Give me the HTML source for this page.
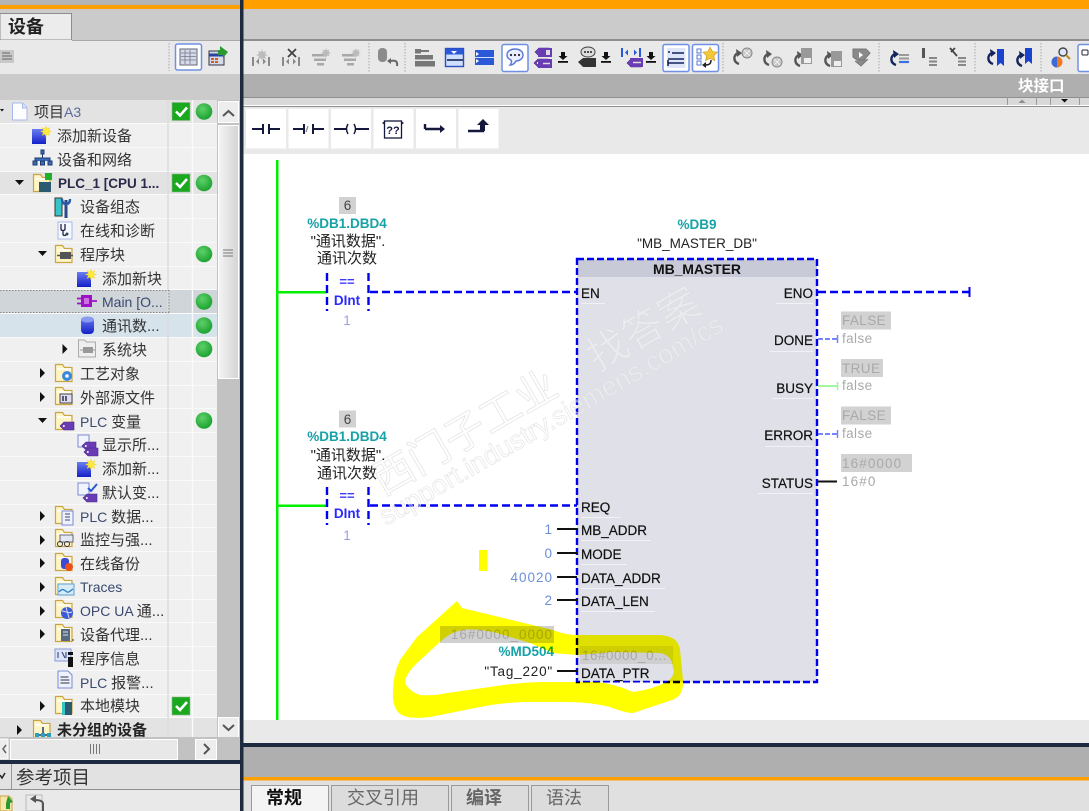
<!DOCTYPE html>
<html lang="zh"><head><meta charset="utf-8"><title>TIA Portal</title>
<style>
html,body{margin:0;padding:0;width:1089px;height:811px;overflow:hidden;background:#fff}
svg{display:block;filter:blur(.35px)}
text{font-family:"Liberation Sans","Noto Sans CJK SC",sans-serif}
.t{font-size:15px;fill:#333}
.l{font-size:13.5px;fill:#111;stroke:#111;stroke-width:.2}
.r{font-size:13.5px;fill:#111;stroke:#111;stroke-width:.2;text-anchor:end}
.teal{font-size:13.5px;fill:#17a2a8;font-weight:bold;text-anchor:middle}
.c{font-size:15px;fill:#222;text-anchor:middle}
.v{font-size:13.5px;fill:#6f8fd8;text-anchor:end;letter-spacing:1px}
.g{font-size:13.5px;fill:#a9a9a9;letter-spacing:.4px}
.tab{font-size:18px;fill:#666;text-anchor:middle}
</style></head><body>
<svg xmlns="http://www.w3.org/2000/svg" width="1089" height="811" viewBox="0 0 1089 811">
<defs>
<radialGradient id="gd" cx=".4" cy=".35" r=".7"><stop offset="0" stop-color="#5fd06a"/><stop offset="1" stop-color="#17a02c"/></radialGradient>
<linearGradient id="sb" x1="0" x2="1" y1="0" y2="0"><stop offset="0" stop-color="#f4f4f4"/><stop offset="1" stop-color="#d4d4d4"/></linearGradient>
<linearGradient id="bt" x1="0" x2="0" y1="0" y2="1"><stop offset="0" stop-color="#6a7df0"/><stop offset="1" stop-color="#1420c8"/></linearGradient>
<g id="dot"><circle r="8.3" fill="url(#gd)"/></g>
<g id="chk"><rect x="-9" y="-9" width="18" height="18" fill="#1aa81e" stroke="#8fb88f" stroke-width=".6"/><path d="M-5 0l4 4 7-8" fill="none" stroke="#fff" stroke-width="2.6"/></g>
<g id="fo"><path d="M.5 3V.5h7l2 3h7.5v14H.5z" fill="#fff4c4" stroke="#c9a544" stroke-width="1.2"/><path d="M2 5h14" stroke="#fff" stroke-width="1.5"/></g>
<g id="add"><rect x="0" y="3" width="14" height="15" fill="url(#bt)"/><path d="M14 0l1 3 3-1.500-1.500 3 3 1-3 1 1.500 3-3-1.500-1 3-1-3-3 1.500 1.500-3-3-1 3-1-1.500-3 3 1.500z" fill="#ffe93a" stroke="#f0d020" stroke-width=".4"/></g>
<path id="ar" d="M0 0l5 5-5 5z" fill="#111"/>
<path id="ad" d="M0 0h9l-4.500 5z" fill="#111"/>
<g id="tg"><path d="M0 5l4-4h10v8H4z" fill="#6a3cb4" stroke="#472a86" stroke-width=".6"/><circle cx="3.800" cy="5" r="1" fill="#fff"/></g>
<g id="dl"><path d="M2 0h4v4h2.500L4 8-.5 4H2z" fill="#111"/><rect x="-1" y="9" width="10" height="1.800" fill="#111"/></g>
<g id="sq"><rect x="0" y="0" width="26" height="27" rx="2" fill="#fff" stroke="#6f90e6" stroke-width="1.500"/></g>
<g id="sep"><path d="M0 0v29" stroke="#a8a8a8" stroke-dasharray="1.500 1.500"/></g>
<g id="bk"><path d="M7 15C1 13 1 6 6 4" fill="none" stroke="#555" stroke-width="2.400"/><path d="M4 0l6 4-5 4z" fill="#555"/></g>
<g id="bkb"><path d="M7 15C1 13 1 6 6 4" fill="none" stroke="#14245c" stroke-width="2.400"/><path d="M4 0l6 4-5 4z" fill="#14245c"/></g>
</defs>

<!-- base -->
<rect width="1089" height="811" fill="#fff"/>
<!-- right top -->
<rect x="243" y="0" width="846" height="9" fill="#ff9f00"/>
<rect x="243" y="9" width="846" height="31" fill="#cbcbcb"/>
<rect x="243" y="39" width="846" height="2" fill="#8e8e8e"/>
<rect x="243" y="41" width="846" height="33" fill="#e9e9e9"/>
<rect x="243" y="74" width="846" height="23" fill="#afafaf"/>
<rect x="243" y="97" width="846" height="8" fill="#d9d9d9"/>
<path d="M243 97.500H1089" stroke="#8e8e8e"/>
<rect x="243" y="105" width="846" height="1.500" fill="#fff"/>
<rect x="243" y="106.500" width="846" height="47.500" fill="#e9e9e9"/>
<path d="M243 106.500H1089" stroke="#8e8e8e"/>
<rect x="243" y="720" width="846" height="23" fill="#e9e9e9"/>
<rect x="243" y="743" width="846" height="4" fill="#1e2a40"/>
<rect x="243" y="747" width="846" height="30" fill="#afafaf"/>
<rect x="243" y="777" width="846" height="3.500" fill="#ff9f00"/>
<rect x="243" y="780.500" width="846" height="31" fill="#e0e0e0"/>

<!-- toolbar icons greyed -->
<g fill="#8a8a8a">
<path d="M252 57h2v9h-2zM256 61.500l3-3v6zM266 61.500l-3-3v6zM268 57h2v9h-2z"/>
<path d="M262 49l1 3 3-1-1 3 3 1-3 1 1 3-3-1-1 3-1-3-3 1 1-3-3-1 3-1-1-3 3 1z" fill="#bbb"/>
<path d="M282 57h2v9h-2zM286 61.500l3-3v6zM296 61.500l-3-3v6zM298 57h2v9h-2z"/>
<path d="M288 49l8 8M296 49l-8 8" stroke="#444" stroke-width="1.800"/>
<path d="M312 54h14v2.500h-14zM314 58.500h12v2.500h-12zM317 63h7v2.500h-7z" fill="#a8a8a8"/>
<path d="M326 48l1 2.500 2.500-1-1 2.500 2.500 1-2.500 1 1 2.500-2.500-1-1 2.500-1-2.500-2.500 1 1-2.500-2.500-1 2.500-1-1-2.500 2.500 1z" fill="#bbb"/>
<path d="M342 54h14v2.500h-14zM344 58.500h12v2.500h-12zM347 63h7v2.500h-7z" fill="#a8a8a8"/>
<path d="M356 48l1 2.500 2.500-1-1 2.500 2.500 1-2.500 1 1 2.500-2.500-1-1 2.500-1-2.500-2.500 1 1-2.500-2.500-1 2.500-1-1-2.500 2.500 1z" fill="#bbb"/>
<rect x="378" y="48" width="9" height="14" rx="4" fill="#8c8c8c"/>
<path d="M397 66c1-5-2-6-6-5" fill="none" stroke="#666" stroke-width="2"/><path d="M387 61l4-3v6z" fill="#666"/>
<path d="M415 49h6v4.500h-6zM415 55h18v4.500h-18zM415 61h20v5.500h-20zM421 50h8v2h-8z" fill="#777"/>
</g>
<use href="#sep" x="369" y="43"/><use href="#sep" x="405" y="43"/>
<rect x="445.500" y="48.500" width="18" height="18" fill="#cfe0ff" stroke="#2a4fc0" stroke-width="1.400"/>
<rect x="446" y="49" width="17" height="5.500" fill="#2a58d8"/><path d="M447 60h16" stroke="#14245c" stroke-width="1.600"/><path d="M451 51h6l-3 3z" fill="#fff"/>
<rect x="475" y="50" width="19" height="15" fill="#2a58d8"/><path d="M475 57.500h19" stroke="#cfe0ff"/><path d="M476 52l3 2-3 2zM476 59l3 2-3 2z" fill="#fff"/>
<use href="#sq" x="502" y="44.500"/>
<path d="M507 55c0-4 4-6 8-6s8 2 8 6-4 6-7 6c-1 2-3 4-6 4 1-1 2-3 1-5-2-1-4-2-4-5z" fill="#eaf0ff" stroke="#5a78d8" stroke-width="1.400"/>
<circle cx="511" cy="55" r="1.100" fill="#223"/><circle cx="515" cy="55" r="1.100" fill="#223"/><circle cx="519" cy="55" r="1.100" fill="#223"/>
<use href="#tg" x="535" y="47"/><rect x="538" y="48" width="14" height="9" fill="#6a3cb4"/><rect x="546" y="50" width="4" height="5" fill="#ddd"/>
<use href="#tg" x="534" y="58"/><rect x="538" y="59" width="14" height="9" fill="#6a3cb4"/><path d="M543 63.500h7" stroke="#ddd" stroke-width="1.500"/>
<use href="#dl" x="559" y="52"/>
<path d="M581 52c0-3 3-5 7-5s7 2 7 5-3 5-7 5-7-2-7-5z" fill="#ddd" stroke="#444"/><circle cx="585" cy="52" r="1" fill="#222"/><circle cx="588" cy="52" r="1" fill="#222"/><circle cx="591" cy="52" r="1" fill="#222"/>
<path d="M578 62l5-4h13v9h-13z" fill="#333"/>
<use href="#dl" x="602" y="52"/>
<path d="M621 48h2v9h-2zM625 52.500l3-3v6zM637 52.500l-3-3v6zM639 48h2v9h-2z" fill="#2a58d8"/>
<use href="#tg" x="627" y="58"/><rect x="630" y="58" width="13" height="9" fill="#6a3cb4"/><path d="M633 62.500h8" stroke="#ddd" stroke-width="1.500"/>
<use href="#dl" x="647" y="52"/>
<use href="#sq" x="663" y="44.500"/><rect x="667" y="48" width="18.500" height="20" fill="#dfe6fa"/>
<path d="M668 52h2M672 53h12M668 60v6M668 63h16M668 59h16" stroke="#14245c" stroke-width="1.600"/>
<use href="#sq" x="692.500" y="44.500"/>
<path d="M697 49h4v4h-4zM697 55h4v4h-4zM697 61h4v4h-4z" fill="none" stroke="#5a78d8"/>
<path d="M710 47l2.500 4.500 5 .7-3.600 3.500.9 5-4.800-2.400-4.400 2.400.9-5-3.600-3.500 5-.7z" fill="#f4c63a" stroke="#c89a1a" stroke-width=".6"/>
<path d="M711 60c0 4-2 5-6 5" fill="none" stroke="#222" stroke-width="1.500"/><path d="M702 65l4-3v6z" fill="#222"/>
<use href="#sep" x="723" y="43"/>
<use href="#bk" x="732" y="49"/><circle cx="747" cy="53" r="5" fill="#c8c8c8" stroke="#888"/><path d="M744 50l6 6M750 50l-6 6" stroke="#eee"/>
<use href="#bk" x="762" y="50"/><circle cx="777" cy="62" r="5" fill="#c8c8c8" stroke="#888"/><path d="M774 59l6 6M780 59l-6 6" stroke="#eee"/>
<use href="#bk" x="793" y="51"/><rect x="801" y="48" width="11" height="16" fill="#999"/><rect x="804" y="58" width="7" height="5" fill="#eee"/>
<use href="#bk" x="823" y="51"/><rect x="831" y="51" width="11" height="16" fill="#999"/><rect x="834" y="61" width="7" height="5" fill="#eee"/>
<path d="M853 49h13l4 4-6 7h-7l-4-3zM855 61l6 5 7-7" fill="#8a8a8a" stroke="#777"/><path d="M859 52l4 3-4 3z" fill="#fff"/>
<use href="#sep" x="879" y="43"/>
<use href="#bkb" x="889" y="50"/><path d="M899 55h10M899 58.500h10" stroke="#999" stroke-width="2"/><path d="M899 62h10" stroke="#3a70e0" stroke-width="2.200"/>
<rect x="922" y="48" width="3" height="10" fill="#555"/><path d="M929 58h8M929 61.500h8M929 65h8" stroke="#888" stroke-width="2"/>
<path d="M950 48l7 8M955 48l-4 4" stroke="#444" stroke-width="1.800"/><path d="M958 58h8M958 61.500h8M958 65h8" stroke="#888" stroke-width="2"/>
<use href="#sep" x="975" y="43"/>
<use href="#bkb" x="986" y="49"/><path d="M997 49h7v17l-3.500-3-3.500 3z" fill="#1a44d0"/>
<use href="#bkb" x="1015" y="51"/><path d="M1025 48h7v16l-3.500-3-3.500 3z" fill="#1a44d0"/>
<use href="#sep" x="1041" y="43"/>
<circle cx="1057" cy="62" r="5.500" fill="#f07820"/><path d="M1057 56.500a5.500 5.500 0 0 0 0 11z" fill="#3a6cd8"/>
<circle cx="1063" cy="52" r="4" fill="#dde8ff" stroke="#444" stroke-width="1.400"/><path d="M1066 55l4 4" stroke="#b89020" stroke-width="2"/>
<rect x="1078" y="44.500" width="13" height="27" rx="2" fill="#fff" stroke="#6f90e6" stroke-width="1.500"/><rect x="1082" y="50" width="6" height="5" rx="1" fill="none" stroke="#223"/>

<text x="1018" y="91" style="font-size:15.500px;font-weight:bold;fill:#fff">块接口</text>
<path d="M1007.500 97v8M1036.500 97v8M1050.500 97v8M1079.500 97v8" stroke="#999"/>
<path d="M1022 99.500l3.500 3.500h-7z" fill="#8e8e8e"/><path d="M1061 99h7l-3.500 3.500z" fill="#111"/>

<!-- ladder buttons -->
<g fill="#fff"><rect x="246" y="109" width="40" height="39.500"/><rect x="288.500" y="109" width="40" height="39.500"/><rect x="331" y="109" width="40" height="39.500"/><rect x="373.500" y="109" width="40" height="39.500"/><rect x="416" y="109" width="40" height="39.500"/><rect x="458.500" y="109" width="40" height="39.500"/></g>
<g fill="none" stroke="#14183c" stroke-width="2">
<path d="M252 129h11M263 124v10M269 124v10M269 129h11"/>
<path d="M293 129h11M304 124v10M313 124v10M313 129h11"/>
<path d="M334 129h12M356 129h13"/><path d="M348 124q-3 5 0 10M354 124q3 5 0 10" stroke-width="1.500"/>
<path d="M425 129h17" stroke-width="2.400"/>
<path d="M425 124v5" stroke-width="2.400"/>
<path d="M468 131h15v-7" stroke-width="2.400"/>
<rect x="384.500" y="121" width="17" height="17" stroke-width="1.300"/>
</g>
<path d="M308 126l-2 6" stroke="#888" stroke-width="1.200"/>
<text x="393" y="134" style="font-size:11px;font-weight:bold;fill:#14183c;text-anchor:middle">??</text>
<path d="M382 123l3 2v-4zM404 123l-3 2v-4z" fill="#14183c"/>
<path d="M440 125l5 4-5 4z" fill="#14183c"/>
<path d="M477 125h12l-6-6z" fill="#14183c"/><rect x="480" y="124" width="5" height="7" fill="#14183c"/>

<!-- LAD: rail -->
<rect x="276" y="160" width="2.500" height="560" fill="#00f000"/>
<rect x="277" y="291" width="50" height="2.500" fill="#00f000"/>
<rect x="277" y="504.500" width="50" height="2.500" fill="#00f000"/>

<!-- FBD block -->
<rect x="577" y="259" width="240" height="423" fill="#dfe0e8"/>
<rect x="578" y="260" width="239" height="17" fill="#c9cad7"/>
<rect x="577" y="259" width="240" height="423" fill="none" stroke="#0000f0" stroke-width="2.400" stroke-dasharray="7 3"/>

<g fill="none" stroke="#0000f0" stroke-width="2.400" stroke-dasharray="8 4">
<path d="M327 273v38M368.500 273v38M370 292H577"/>
<path d="M327 487v38M368.500 487v38M370 505.500H577"/>
<path d="M818 292H969"/>
</g>
<path d="M969.500 287v10" stroke="#0000f0" stroke-width="2"/>

<!-- Watermark -->
<g transform="translate(393 473) rotate(-30)" style="fill:#fff;fill-opacity:.35;stroke:#dcdcdc;stroke-opacity:.75;stroke-width:.8">
<text x="-20" y="15" style="font-size:41px;font-family:'Noto Sans CJK SC',sans-serif" textLength="205">西门子工业</text>
<text x="227" y="15" style="font-size:41px;font-family:'Noto Sans CJK SC',sans-serif" textLength="123">找答案</text>
</g>
<g transform="translate(386 526) rotate(-30)" style="fill:#fff;fill-opacity:.35;stroke:#dcdcdc;stroke-opacity:.75;stroke-width:.7">
<text x="0" y="0" style="font-size:27px" textLength="392">support.industry.siemens.com/cs</text>
</g>

<!-- comparator 1 -->
<rect x="339" y="197" width="17" height="17" fill="#d2d2d2"/>
<text x="347.500" y="210" style="font-size:13.500px;fill:#444;text-anchor:middle">6</text>
<text class="teal" x="347" y="228">%DB1.DBD4</text>
<text class="c" x="348" y="246">"通讯数据".</text>
<text class="c" x="347" y="263">通讯次数</text>
<text x="347" y="286" style="font-size:13px;font-weight:bold;fill:#3a3aff;text-anchor:middle">==</text>
<text x="347" y="305" style="font-size:13.500px;font-weight:bold;fill:#2a2aff;text-anchor:middle">DInt</text>
<text x="347" y="325" style="font-size:13.500px;fill:#9aa0e0;text-anchor:middle">1</text>
<!-- comparator 2 -->
<rect x="339" y="410.500" width="17" height="17" fill="#d2d2d2"/>
<text x="347.500" y="424" style="font-size:13.500px;fill:#444;text-anchor:middle">6</text>
<text class="teal" x="347" y="441">%DB1.DBD4</text>
<text class="c" x="348" y="460">"通讯数据".</text>
<text class="c" x="347" y="478">通讯次数</text>
<text x="347" y="500" style="font-size:13px;font-weight:bold;fill:#3a3aff;text-anchor:middle">==</text>
<text x="347" y="518" style="font-size:13.500px;font-weight:bold;fill:#2a2aff;text-anchor:middle">DInt</text>
<text x="347" y="540" style="font-size:13.500px;fill:#9aa0e0;text-anchor:middle">1</text>

<!-- block header -->
<text x="697" y="229" style="font-size:13.500px;font-weight:bold;fill:#17a2a8;text-anchor:middle">%DB9</text>
<text x="697" y="248" style="font-size:13.500px;fill:#222;text-anchor:middle">"MB_MASTER_DB"</text>
<text x="697" y="274" style="font-size:14px;fill:#111;text-anchor:middle;font-weight:bold" textLength="88">MB_MASTER</text>

<!-- pins labels -->
<text class="l" x="581" y="298">EN</text>
<text class="l" x="581" y="512">REQ</text>
<text class="l" x="581" y="535">MB_ADDR</text>
<text class="l" x="581" y="559">MODE</text>
<text class="l" x="581" y="583">DATA_ADDR</text>
<text class="l" x="581" y="606">DATA_LEN</text>
<text class="l" x="581" y="678">DATA_PTR</text>
<text class="r" x="813" y="298">ENO</text>
<text class="r" x="813" y="345">DONE</text>
<text class="r" x="813" y="393">BUSY</text>
<text class="r" x="813" y="440">ERROR</text>
<text class="r" x="813" y="488">STATUS</text>
<g stroke="#f2f2f6"><path d="M581 303.500h24M581 517.500h40M581 540.500h70M581 564.500h46M581 588.500h84M581 611.500h74M581 683h70M776 303.500h37M770 351.500h43M772 398.500h41M765 446.500h48M758 493.500h55"/></g>

<!-- right outputs -->
<path d="M818 339h20" stroke="#7485ff" stroke-width="2" stroke-dasharray="5 2"/><path d="M837.500 335v8" stroke="#7485ff" stroke-width="1.500"/>
<path d="M818 386h20" stroke="#a2f5a2" stroke-width="2"/><path d="M837.500 382v8" stroke="#a2f5a2" stroke-width="1.500"/>
<path d="M818 434h20" stroke="#7485ff" stroke-width="2" stroke-dasharray="5 2"/><path d="M837.500 430v8" stroke="#7485ff" stroke-width="1.500"/>
<path d="M818 481.500h19" stroke="#111" stroke-width="2"/>
<g fill="#d2d2d2"><rect x="841" y="311.500" width="50" height="18"/><rect x="841" y="359" width="42" height="18"/><rect x="841" y="406.500" width="50" height="18"/><rect x="841" y="454" width="71" height="18"/></g>
<text class="g" x="842" y="325">FALSE</text><text class="g" x="842" y="343">false</text>
<text class="g" x="842" y="373">TRUE</text><text class="g" x="842" y="390">false</text>
<text class="g" x="842" y="420">FALSE</text><text class="g" x="842" y="438">false</text>
<text class="g" x="842" y="468" style="letter-spacing:1.100px">16#0000</text><text class="g" x="842" y="486" style="letter-spacing:1.100px">16#0</text>

<!-- left inputs -->
<g stroke="#111" stroke-width="2"><path d="M557 529h20M557 553h20M557 577h20M557 600h20M557 671h20"/></g>
<text class="v" x="553" y="534">1</text>
<text class="v" x="553" y="558">0</text>
<text class="v" x="553" y="582">40020</text>
<text class="v" x="553" y="605">2</text>
<rect x="440" y="626" width="114" height="17" fill="#d0d0d0"/>
<text x="553" y="639" style="font-size:13.500px;fill:#a8a8a8;text-anchor:end;letter-spacing:1px">16#0000_0000</text>
<text x="554" y="656" style="font-size:13.500px;font-weight:bold;fill:#17a2a8;text-anchor:end">%MD504</text>
<text x="553" y="676" style="font-size:13.500px;fill:#222;text-anchor:end;letter-spacing:.8px">"Tag_220"</text>
<rect x="580" y="646" width="93" height="18" fill="#cfcfd2"/>
<text x="582" y="660" style="font-size:13.500px;fill:#a8a8a8;letter-spacing:.5px">16#0000_0...</text>

<!-- yellow highlight -->
<path style="mix-blend-mode:multiply" fill="#ffff00" fill-rule="evenodd" d="M457 601L462 608L553 630Q565 635 577 635L655 635Q678 634 680 650L683 680Q684 696 672 700L633 713Q625 713 610 707Q590 702 567 702L523 702Q500 703 480 707L430 717Q405 720 398 712Q392 705 393 690Q393 675 400 660L417 637ZM405 683Q410 692 420 695Q435 696 447 693L490 687Q520 682 547 682L597 682Q615 684 633 692Q650 690 667 682Q676 675 673 668Q672 655 660 653L613 652L577 655L553 653L530 643L497 633Q475 628 463 630Q450 632 440 642L417 663Q405 675 405 683Z"/>
<rect x="479" y="550" width="8.500" height="21" fill="#ffff00"/>

<!-- LEFT PANEL -->
<rect x="0" y="0" width="240" height="100" fill="#cbcbcb"/>
<rect x="0" y="0" width="240" height="5" fill="#b4b4b4"/>
<rect x="0" y="5" width="240" height="4" fill="#ff9f00"/>
<path d="M0 13.500H71.500V40H0z" fill="#ececec" stroke="#8e8e8e"/>
<text x="8" y="33" style="font-size:18px;font-weight:bold;fill:#222">设备</text>
<rect x="0" y="40" width="240" height="34" fill="#e9e9e9"/>
<path d="M72 40.500H240" stroke="#a8a8a8"/>
<rect x="0" y="74" width="240" height="26" fill="#cbcbcb"/>
<path d="M0 50h14v13H0z" fill="#c8c8c8"/><path d="M2 53h8M2 56h10M2 59h10" stroke="#777" stroke-width="1.200"/>
<path d="M169 43v28" stroke="#aaa" stroke-dasharray="1.500 1.500"/>
<rect x="175.500" y="44" width="26" height="26" rx="2" fill="#fff" stroke="#6f90e6" stroke-width="1.500"/>
<rect x="180" y="49" width="17" height="16" fill="#d4daea" stroke="#667"/><path d="M181 53h15M181 56.500h15M181 60h15M185 50v14M190 50v14" stroke="#778" stroke-width=".8"/>
<rect x="209" y="51" width="15" height="14" fill="#d4daea" stroke="#334"/><path d="M209 55h15" stroke="#2a44a0" stroke-width="3"/><path d="M211 58h3v2h-3zM215 58h3v2h-3zM211 61h3v2h-3zM215 61h3v2h-3z" fill="#d06020"/>
<path d="M220 46l8 6-5 6v-3h-5v-5h2z" fill="#2a9a30"/>

<!-- tree -->
<rect x="0" y="100" width="217" height="637" fill="#f0f0f0"/>
<rect x="0" y="100" width="217" height="23" fill="#e3e3e3"/>
<rect x="0" y="172" width="217" height="22" fill="#e3e3e3"/>
<rect x="0" y="290" width="192" height="23" fill="#cfd5d9"/>
<rect x="193" y="290" width="24" height="23" fill="#cfd5d9"/>
<rect x="0" y="314" width="217" height="23" fill="#d6e3ea"/>
<rect x="0" y="718" width="217" height="19" fill="#e3e3e3"/>
<g stroke="#fafafa"><path d="M0 123.500H217M0 147.500H217M0 171.500H217M0 194.500H217M0 218.500H217M0 242.500H217M0 266.500H217M0 289.500H217M0 313.500H217M0 337.500H217M0 361.500H217M0 385.500H217M0 408.500H217M0 432.500H217M0 456.500H217M0 480.500H217M0 504.500H217M0 527.500H217M0 551.500H217M0 575.500H217M0 599.500H217M0 622.500H217M0 646.500H217M0 670.500H217M0 694.500H217M0 717.500H217"/></g>
<path d="M168 100V737" stroke="#dcdcdc" stroke-width="1.500"/><path d="M192.500 100V737" stroke="#fafafa" stroke-width="1.500"/>
<path d="M0 290.500H169M0 312.500H169M169 290V313" fill="none" stroke="#8a8a8a" stroke-dasharray="1.500 1.500"/>

<!-- row contents -->
<path d="M0 109h4l-2 2.500z" fill="#111"/>
<path d="M12.500 103h10l4.500 4.500V120h-14.500z" fill="#fdfdff" stroke="#a8b8e8"/><path d="M22.500 103v5h4.500" fill="#dde4f8" stroke="#a8b8e8"/>
<text class="t" x="34" y="117">项目<tspan fill="#5a6a9a" style="font-size:14px">A3</tspan></text>
<use href="#chk" x="181" y="111.500"/><use href="#dot" x="204" y="111.500"/>

<use href="#add" x="32" y="126"/><text class="t" x="57" y="141">添加新设备</text>
<path d="M41 150h3v4h-3zM33 161h4v4h-4zM40.500 161h4v4h-4zM48 161h4v4h-4zM35 161v-3h15v3M42.500 154v4" fill="#3a6cb8" stroke="#223a70"/>
<text class="t" x="57" y="165">设备和网络</text>

<use href="#ad" x="15" y="180"/>
<use href="#fo" x="33" y="174"/><rect x="39" y="182" width="12" height="10" fill="#2c5a70"/><rect x="45" y="173" width="7" height="7" fill="#1fb02a"/>
<text x="58" y="188" style="font-size:13.500px;fill:#2a2a4a;font-weight:bold">PLC_1 [CPU 1...</text>
<use href="#chk" x="181" y="183"/><use href="#dot" x="204" y="183"/>

<rect x="55" y="198" width="7" height="18" fill="#35c4c8" stroke="#333"/><path d="M66 200v18" stroke="#2a4a8a" stroke-width="3"/><path d="M62 199c0 4 2 5 4 5s4-1 4-5" fill="none" stroke="#2a5aa8" stroke-width="2.400"/>
<text class="t" x="80" y="212">设备组态</text>

<rect x="58" y="222" width="14" height="17" fill="#f6f8ff" stroke="#a8b8e8"/><path d="M61 224v5c0 2 4 2 4 0v-5M63 231v3c0 2 3 2 3 0" fill="none" stroke="#224" stroke-width="1.300"/><circle cx="67" cy="234" r="1.500" fill="#345"/>
<text class="t" x="80" y="236">在线和诊断</text>

<use href="#ad" x="38" y="251"/><use href="#fo" x="55" y="245"/><rect x="60" y="252" width="11" height="7" fill="#555"/><path d="M57 255.500h16" stroke="#555" stroke-width="1.500"/>
<text class="t" x="80" y="260">程序块</text><use href="#dot" x="204" y="254"/>

<use href="#add" x="77" y="269"/><text class="t" x="102" y="284">添加新块</text>

<rect x="81" y="295" width="11" height="12" fill="#9c14c8"/><path d="M77 298.500h4M77 303.500h4M92 301h5" stroke="#9c14c8" stroke-width="1.800"/><rect x="84" y="298" width="5" height="6" fill="#d070e0"/>
<text x="102" y="307" style="font-size:14px;fill:#3a4a70">Main [O...</text><use href="#dot" x="204" y="301.500"/>

<rect x="81" y="317" width="13" height="17" rx="4" fill="url(#bt)"/><ellipse cx="87.500" cy="319.500" rx="6.500" ry="3" fill="#8a9af0"/>
<text class="t" x="102" y="331">通讯数...</text><use href="#dot" x="204" y="325.500"/>

<use href="#ar" x="62.500" y="344"/>
<path d="M78.500 341v-1h6l2 2h9v15h-17z" fill="#eee" stroke="#aaa"/><rect x="83" y="347" width="10" height="6" fill="#999"/><path d="M80 350h15" stroke="#999"/>
<text class="t" x="102" y="355">系统块</text><use href="#dot" x="204" y="349"/>

<use href="#ar" x="40" y="368"/><use href="#fo" x="55" y="364"/><circle cx="67" cy="376" r="5" fill="#3a88e0"/><circle cx="67" cy="376" r="1.800" fill="#fff"/>
<text class="t" x="80" y="379">工艺对象</text>
<use href="#ar" x="40" y="392"/><use href="#fo" x="55" y="387"/><rect x="60" y="394" width="12" height="9" fill="#dde" stroke="#445"/><path d="M63 396v5M66 396v5" stroke="#224" stroke-width="1.400"/>
<text class="t" x="80" y="403">外部源文件</text>

<use href="#ad" x="38" y="418"/><use href="#fo" x="55" y="412"/><use href="#tg" x="60" y="421"/>
<text class="t" x="80" y="427"><tspan fill="#3a4a70" style="font-size:14px">PLC </tspan>变量</text><use href="#dot" x="204" y="420.500"/>

<rect x="78" y="435" width="11" height="12" fill="#f0f4ff" stroke="#7a8ad0"/><use href="#tg" x="82" y="441"/><use href="#tg" x="84" y="447"/>
<text class="t" x="102" y="450">显示所...</text>
<use href="#add" x="77" y="459"/><text class="t" x="102" y="474">添加新...</text>
<rect x="78" y="483" width="11" height="12" fill="#f0f4ff" stroke="#7a8ad0"/><path d="M88 488l3 3 6-7" fill="none" stroke="#2a58d8" stroke-width="2"/><use href="#tg" x="83" y="493"/>
<text class="t" x="102" y="498">默认变...</text>

<use href="#ar" x="40" y="511"/><use href="#fo" x="55" y="506"/><rect x="62" y="511" width="11" height="14" fill="#eef2ff" stroke="#7a8ad0"/><path d="M65 514h5M65 517h5M65 520h5" stroke="#446"/>
<text class="t" x="80" y="522"><tspan fill="#3a4a70" style="font-size:14px">PLC </tspan>数据...</text>

<use href="#ar" x="40" y="535"/><use href="#fo" x="55" y="529"/><rect x="60" y="535" width="13" height="7" fill="#e4e8f4" stroke="#667"/><circle cx="60" cy="544" r="2.500" fill="none" stroke="#334"/><circle cx="67" cy="544" r="2.500" fill="none" stroke="#334"/>
<text class="t" x="80" y="545">监控与强...</text>

<use href="#ar" x="40" y="558"/><use href="#fo" x="55" y="553"/><rect x="61" y="558" width="8" height="11" rx="3" fill="#3a4ad8"/><circle cx="69" cy="567" r="4" fill="#e8501c"/>
<text class="t" x="80" y="569">在线备份</text>

<use href="#ar" x="40" y="582"/><use href="#fo" x="55" y="577"/><rect x="58" y="584" width="16" height="11" fill="#d8ecf8" stroke="#5aa0d0"/><path d="M59 592c4-5 6-1 8 0s4-2 6-3" fill="none" stroke="#2a80c8" stroke-width="1.300"/>
<text x="80" y="592" style="font-size:14px;fill:#3a4a70">Traces</text>

<use href="#ar" x="40" y="606"/><use href="#fo" x="55" y="600"/><circle cx="67" cy="613" r="6" fill="#3a5ad8"/><path d="M62 611c4 0 6 3 10 1M66 607l3 11" stroke="#dde" fill="none"/>
<text class="t" x="80" y="616"><tspan fill="#3a4a70" style="font-size:14px">OPC UA </tspan>通...</text>

<use href="#ar" x="40" y="629"/><use href="#fo" x="55" y="624"/><rect x="61" y="629" width="9" height="12" fill="#556a80"/><path d="M63 632h5M63 635h5" stroke="#dde"/><path d="M72 640h2" stroke="#334"/>
<text class="t" x="80" y="640">设备代理...</text>

<rect x="55" y="649" width="16" height="12" fill="#dde4f8" stroke="#8a9ad8"/><path d="M58 652v6M62 652l3 6M66 652v6" stroke="#223a70"/><rect x="68" y="657" width="5" height="10" fill="#111"/><rect x="68" y="652" width="5" height="3" fill="#111"/>
<text class="t" x="80" y="664">程序信息</text>

<path d="M58 671h10l4 4v13H58z" fill="#eef2ff" stroke="#7a8ad0"/><path d="M60.500 677h8M60.500 680h9M60.500 683h9" stroke="#334"/>
<text class="t" x="80" y="688"><tspan fill="#3a4a70" style="font-size:14px">PLC </tspan>报警...</text>

<use href="#ar" x="40" y="701"/><use href="#fo" x="55" y="696"/><rect x="62" y="702" width="10" height="13" fill="#2c5a70"/><rect x="62" y="702" width="3" height="13" fill="#35c4c8"/>
<text class="t" x="80" y="711">本地模块</text><use href="#chk" x="181" y="706"/>

<use href="#ar" x="17" y="725"/><use href="#fo" x="33" y="720"/><path d="M36 735h14M43 727v6" stroke="#223a70" stroke-width="1.500"/><path d="M35 733h4v4h-4zM41 733h4v4h-4zM47 733h4v4h-4z" fill="#2aa0c0"/>
<text x="57" y="735" style="font-size:15px;font-weight:bold;fill:#222">未分组的设备</text>

<!-- scrollbar v -->
<rect x="217" y="100" width="23" height="637" fill="#c2c2c2"/>
<rect x="218.500" y="101.500" width="20" height="21" fill="#ededed" stroke="#fff"/>
<path d="M223 116l5.500-5 5.500 5" fill="none" stroke="#555" stroke-width="2"/>
<rect x="218.500" y="125.500" width="20" height="253" fill="url(#sb)" stroke="#fff"/>
<path d="M223 250h10M223 253h10M223 256h10" stroke="#777"/>
<rect x="218.500" y="717.500" width="20" height="20" fill="#ededed" stroke="#fff"/>
<path d="M223 725l5.500 5 5.500-5" fill="none" stroke="#555" stroke-width="2"/>
<!-- scrollbar h -->
<rect x="0" y="737" width="240" height="23" fill="#c2c2c2"/>
<rect x="-1" y="739" width="9" height="20" fill="#ededed" stroke="#fff"/>
<path d="M6 745l-3 4 3 4" fill="none" stroke="#666" stroke-width="1.500"/>
<rect x="10.500" y="739.500" width="167" height="20" fill="#e8e8e8" stroke="#fff"/>
<path d="M90.500 744v10M93.500 744v10M96.500 744v10M99.500 744v10" stroke="#777"/>
<rect x="195.500" y="739.500" width="21" height="20" fill="#ededed" stroke="#fff"/>
<path d="M204 744l5 5-5 5" fill="none" stroke="#555" stroke-width="2"/>
<!-- bottom left -->
<rect x="0" y="760" width="240" height="4" fill="#1e2a40"/>
<rect x="0" y="764" width="240" height="25" fill="#e2e2e2"/>
<path d="M0 789.500H240" stroke="#8e8e8e"/><path d="M11.500 764v25" stroke="#999"/>
<path d="M0 775l2 3 3-5" fill="none" stroke="#222" stroke-width="1.500"/>
<text x="16" y="784" style="font-size:18.500px;fill:#333">参考项目</text>
<rect x="0" y="790" width="240" height="21" fill="#e9e9e9"/>
<path d="M0 796h9l3 3v12H0z" fill="#f5e7a8" stroke="#c9a544"/><path d="M8 796l5 6-3 1v6H6v-6z" fill="#2a9a30"/>
<path d="M26 795h16v16H26z" fill="none" stroke="#bbb"/><path d="M43 811v-7c0-3-4-4-8-4" fill="none" stroke="#555" stroke-width="2"/><path d="M30 799l6-4v8z" fill="#555"/>

<!-- divider -->
<rect x="240" y="0" width="3.500" height="811" fill="#1e2a40"/>

<!-- bottom tabs -->
<rect x="251.500" y="785.500" width="77" height="27" fill="#f4f4f4" stroke="#9a9a9a"/>
<rect x="331.500" y="785.500" width="117" height="27" fill="#dcdcdc" stroke="#9a9a9a"/>
<rect x="451.500" y="785.500" width="77" height="27" fill="#dcdcdc" stroke="#9a9a9a"/>
<rect x="531.500" y="785.500" width="77" height="27" fill="#dcdcdc" stroke="#9a9a9a"/>
<text class="tab" x="284" y="804" style="font-weight:bold;fill:#111">常规</text>
<text class="tab" x="383" y="804">交叉引用</text>
<text class="tab" x="484" y="804" style="font-weight:bold">编译</text>
<text class="tab" x="564" y="804">语法</text>
</svg>
</body></html>
